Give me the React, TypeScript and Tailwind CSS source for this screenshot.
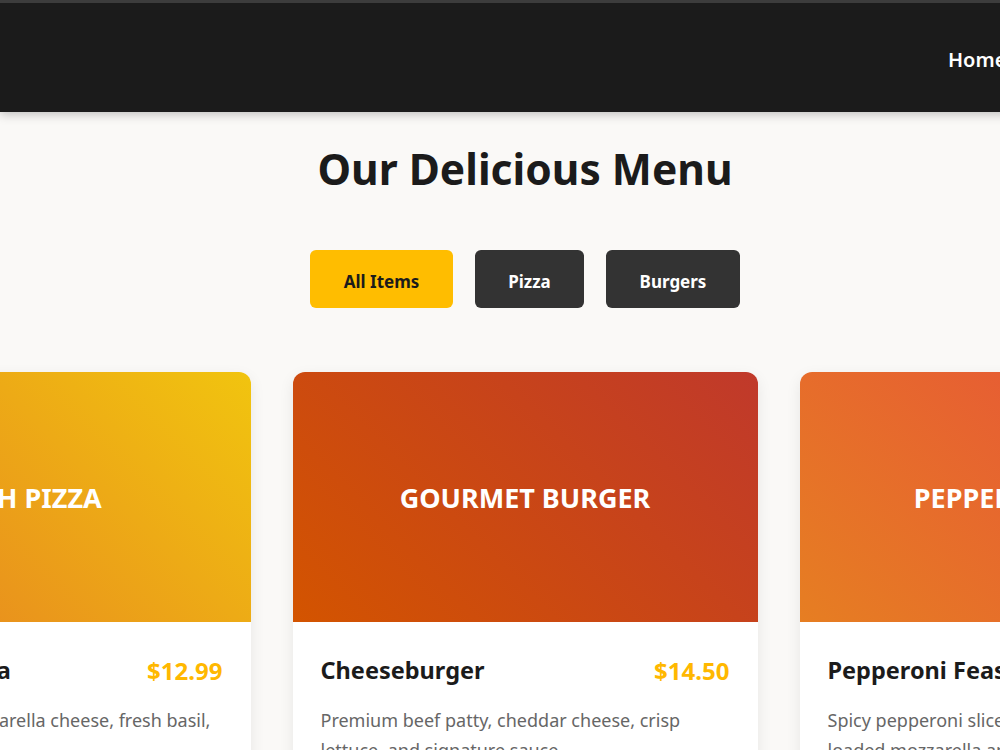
import React from "react"

const items = [
    {
        label: "FRESH PIZZA",
        name: "Margherita Pizza",
        price: "$12.99",
        desc: "Fresh tomatoes, mozzarella cheese, fresh basil, and olive oil",
        bg: "bg-[linear-gradient(45deg,#e67e22,#f1c40f)]",
    },
    {
        label: "GOURMET BURGER",
        name: "Cheeseburger",
        price: "$14.50",
        desc: "Premium beef patty, cheddar cheese, crisp lettuce, and signature sauce",
        bg: "bg-[linear-gradient(45deg,#d35400,#c0392b)]",
    },
    {
        label: "PEPPERONI PIZZA",
        name: "Pepperoni Feast",
        price: "$15.99",
        desc: "Spicy pepperoni slices, tangy tomato sauce, loaded mozzarella and oregano",
        bg: "bg-[linear-gradient(45deg,#e67e22,#e74c3c)]",
    },
]

function MenuCard({ item }: { item: (typeof items)[number] }) {
    return (
        <div className="w-[465px] shrink-0 rounded-xl overflow-hidden bg-white shadow-[0_5px_15px_rgba(0,0,0,0.08)]">
            <div className={`h-[250px] flex items-center justify-center ${item.bg}`}>
                <span className="text-white font-bold text-[27px] pt-[2px]">{item.label}</span>
            </div>
            <div className="px-[28px] pt-[31px] pb-6">
                <div className="flex items-center justify-between">
                    <h3 className="text-[23.5px] font-bold text-[#1b1b1b]">{item.name}</h3>
                    <span className="text-[24px] font-bold text-[#ffb800]">{item.price}</span>
                </div>
                <p className="mt-[16px] text-[18px] leading-[30px] text-[#666]">{item.desc}</p>
            </div>
        </div>
    )
}

export default function App() {
    return (
        <div className="w-[1000px] h-[750px] overflow-hidden bg-[#faf9f7] font-['Noto_Sans',sans-serif]">
            <div className="w-[1050px]">
                <header className="h-[112px] bg-[#1b1b1b] border-t-[3px] border-[#3c3c3c] shadow-[0_2px_10px_rgba(0,0,0,0.25)] flex items-center pl-[948px] pt-[5px]">
                    <nav className="flex gap-8 text-white text-[20px] font-semibold whitespace-nowrap">
                        <a>Home</a>
                    </nav>
                </header>

                <main className="pt-[29px]">
                    <h1 className="text-center text-[42.5px] font-bold text-[#1b1b1b] leading-[56px]">Our Delicious Menu</h1>

                    <div className="mt-[53px] flex justify-center gap-[22px]">
                        <button className="w-[143px] h-[58px] pt-[5px] rounded-md bg-[#ffbd00] text-[#1b1b1b] font-bold text-[17px]">All Items</button>
                        <button className="w-[109px] h-[58px] pt-[5px] rounded-md bg-[#333] text-white font-bold text-[17px]">Pizza</button>
                        <button className="w-[134px] h-[58px] pt-[5px] rounded-md bg-[#333] text-white font-bold text-[17px]">Burgers</button>
                    </div>

                    <div className="mt-[64px] flex justify-center gap-[42px]">
                        {items.map(item => (
                            <MenuCard key={item.name} item={item} />
                        ))}
                    </div>
                </main>
            </div>
        </div>
    )
}
